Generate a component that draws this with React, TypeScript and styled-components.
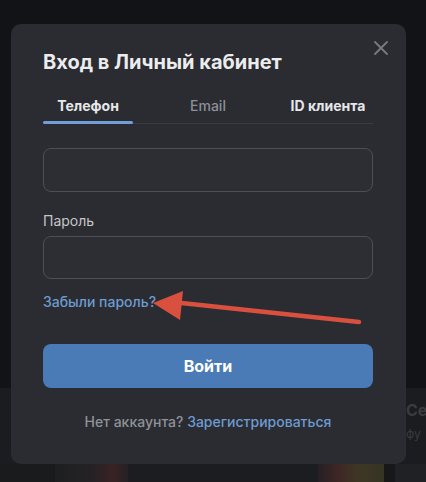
import React from "react";
import styled, { createGlobalStyle } from "styled-components";

const Global = createGlobalStyle`
  html, body { margin: 0; padding: 0; background: #121316; }
  body { font-family: Inter, "Noto Sans", Roboto, sans-serif; -webkit-font-smoothing: antialiased; }
  * { box-sizing: border-box; }
`;

const Page = styled.div`
  position: relative;
  width: 426px;
  height: 482px;
  overflow: hidden;
  display: flex;
  flex-direction: column;
  background: #121316;
`;

const TopArea = styled.div`
  height: 388px;
  background: #121316;
`;

const Band = styled.div`
  flex: 1;
  background: #1b1c1f;
  display: flex;
  align-items: flex-end;
  position: relative;
`;

const CardRow = styled.div`
  display: flex;
  width: 100%;
  height: 18px;
`;

const Thumb = styled.div<{ $w: number; $bg: string }>`
  width: ${(p) => p.$w}px;
  background: ${(p) => p.$bg};
`;

const SideCard = styled.div`
  position: absolute;
  left: 406px;
  top: 12px;
  display: flex;
  flex-direction: column;
  gap: 4px;
  color: #3a3b3f;
  font-weight: 700;
  font-size: 16px;
  line-height: 20px;
  span + span { font-size: 12px; font-weight: 400; }
`;

const Modal = styled.div`
  position: absolute;
  left: 11px;
  top: 24px;
  width: 395px;
  height: 440px;
  background: #2a2c31;
  border-radius: 10px;
  padding: 26px 33px 33px 32px;
  display: flex;
  flex-direction: column;
`;

const Close = styled.button`
  position: absolute;
  right: 17px;
  top: 16px;
  width: 16px;
  height: 16px;
  padding: 0;
  border: 0;
  background: none;
  display: flex;
  align-items: center;
  justify-content: center;
`;

const Title = styled.h2`
  margin: 0;
  font-size: 20px;
  line-height: 24px;
  font-weight: 700;
  color: #ececee;
`;

const Tabs = styled.div`
  margin-top: 14px;
  display: flex;
  justify-content: space-between;
  border-bottom: 1px solid #393c43;
  height: 36px;
`;

const Tab = styled.div<{ $active?: boolean; $dim?: boolean }>`
  position: relative;
  width: 90px;
  padding-top: 8px;
  line-height: 20px;
  text-align: center;
  font-size: 14px;
  font-weight: ${(p) => (p.$dim ? 500 : 700)};
  color: ${(p) => (p.$dim ? "#8d9096" : "#e6e7ea")};
  &::after {
    content: "";
    display: ${(p) => (p.$active ? "block" : "none")};
    position: absolute;
    left: 0;
    right: 0;
    bottom: -1px;
    height: 3px;
    border-radius: 2px;
    background: #6f9fd6;
  }
`;

const Input = styled.div<{ $mt: number }>`
  margin-top: ${(p) => p.$mt}px;
  height: 44px;
  border: 1px solid #4c4f56;
  border-radius: 8px;
  background: #2c2e34;
`;

const Label = styled.div`
  margin-top: 20px;
  font-size: 14px;
  line-height: 18px;
  color: #c4c6ca;
`;

const Link = styled.a`
  font-size: 14px;
  line-height: 18px;
  font-weight: 500;
  color: #6e9bd0;
  text-decoration: none;
`;

const Forgot = styled.div`
  margin-top: 13px;
  line-height: 18px;
`;

const Button = styled.button`
  margin-top: 33px;
  height: 44px;
  border: 0;
  border-radius: 8px;
  background: #4a7bb6;
  color: #ffffff;
  font-family: inherit;
  font-size: 16px;
  font-weight: 700;
`;

const Footer = styled.div`
  margin-top: 25px;
  text-align: center;
  font-size: 14px;
  line-height: 18px;
  font-weight: 500;
  color: #8f9298;
`;

const Arrow = styled.svg`
  position: absolute;
  left: 0;
  top: 0;
  pointer-events: none;
`;

export default function App() {
  return (
    <>
      <Global />
      <Page>
        <TopArea />
        <Band>
          <SideCard>
            <span>Се</span>
            <span>фу</span>
          </SideCard>
          <CardRow>
            <Thumb $w={55} $bg="#1a1b1d" />
            <Thumb $w={73} $bg="linear-gradient(90deg,#1e1f22 0%,#242224 50%,#3a2224 80%,#242124 100%)" />
            <Thumb $w={190} $bg="#1c1d20" />
            <Thumb $w={66} $bg="linear-gradient(90deg,#242124 0%,#3e2624 30%,#3e3624 60%,#363424 100%)" />
            <Thumb $w={11} $bg="#17181a" />
            <Thumb $w={31} $bg="#202124" />
          </CardRow>
        </Band>
        <Modal>
          <Close aria-label="Закрыть">
            <svg width="16" height="16" viewBox="0 0 16 16">
              <path d="M2 2L14 14M14 2L2 14" stroke="#777a81" strokeWidth="1.8" strokeLinecap="round" />
            </svg>
          </Close>
          <Title>Вход в Личный кабинет</Title>
          <Tabs>
            <Tab $active>Телефон</Tab>
            <Tab $dim>Email</Tab>
            <Tab>ID клиента</Tab>
          </Tabs>
          <Input $mt={24} />
          <Label>Пароль</Label>
          <Input $mt={6} />
          <Forgot>
            <Link href="#">Забыли пароль?</Link>
          </Forgot>
          <Button>Войти</Button>
          <Footer>
            Нет аккаунта? <Link href="#">Зарегистрироваться</Link>
          </Footer>
        </Modal>
        <Arrow width="426" height="482" viewBox="0 0 426 482">
          <line x1="359" y1="322" x2="172" y2="302" stroke="#d9503f" strokeWidth="4.5" strokeLinecap="round" />
          <polygon points="153,303 183,291 180,320" fill="#d9503f" />
        </Arrow>
      </Page>
    </>
  );
}
